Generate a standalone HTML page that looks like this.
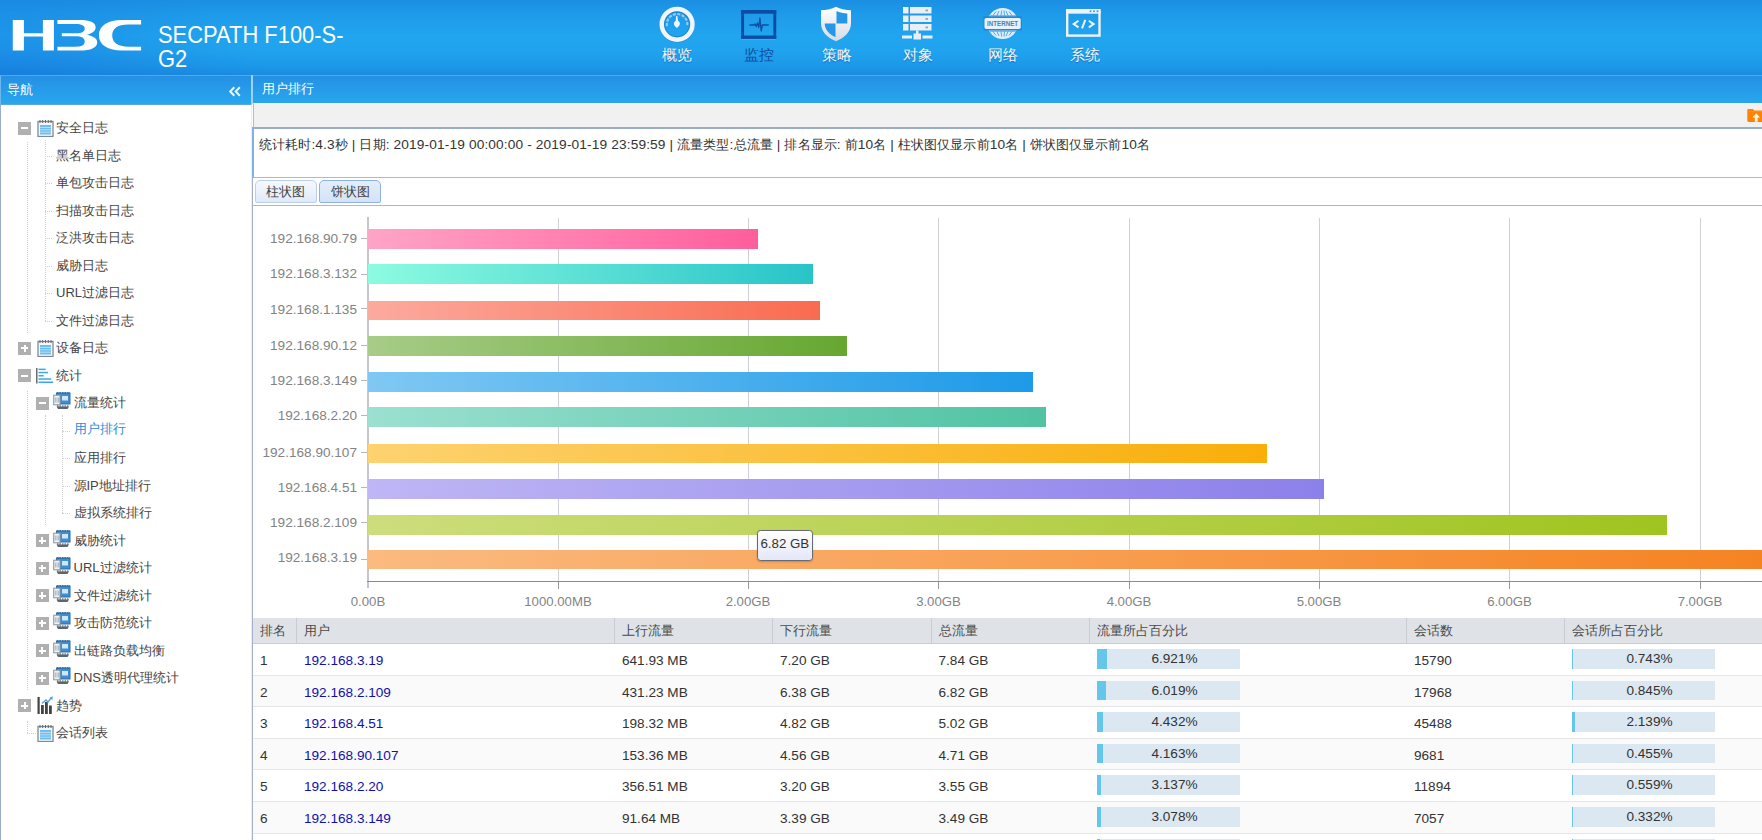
<!DOCTYPE html>
<html lang="zh">
<head>
<meta charset="utf-8">
<title>H3C SECPATH F100-S-G2</title>
<style>
*{box-sizing:border-box;margin:0;padding:0}
html,body{width:1762px;height:840px;overflow:hidden;background:#fff}
body{position:relative;font-family:"Liberation Sans",sans-serif;font-size:13px;color:#333}
.abs{position:absolute}
/* header */
#hdr{position:absolute;left:0;top:0;width:1762px;height:75px;background:linear-gradient(180deg,#1b8fe3 0%,#1e9cea 22%,#21a5ef 48%,#20a3ee 68%,#1c98e8 88%,#1a8ce0 100%)}
#hdr .vig{position:absolute;left:0;top:0;width:260px;height:75px;background:radial-gradient(ellipse 260px 110px at 0 100%,rgba(20,105,215,.42),rgba(20,110,215,0))}
#ttl{position:absolute;left:158.3px;top:23px;color:#fff;font-size:24px;line-height:23.8px;white-space:nowrap;transform:scaleX(.913);transform-origin:0 0}
.mi{position:absolute;top:46px;width:60px;text-align:center;color:#f2f6fa;font-size:15px;line-height:18px;text-shadow:0 1px 1px rgba(0,60,130,.45)}
.mi.sel{color:#0c4ea4;text-shadow:none}
/* nav */
#navt{position:absolute;left:0;top:75px;width:251px;height:29px;background:linear-gradient(180deg,#2590e3 0,#2699e8 40%,#28a7ee 100%);border-left:1px solid #6db6f0;border-top:1px solid #4aaaf2}
#navt span{position:absolute;left:6px;top:6px;color:#fff;font-size:13px;line-height:16px}
#navb{position:absolute;left:0;top:104px;width:252px;height:736px;background:#fff;border-left:1px solid #9caccb;border-right:1px solid #e6eef8;border-top:1px solid #5aa6e4}
.tr{position:absolute;left:0;height:27.5px;width:250px;line-height:27.5px;font-size:13px;color:#444;white-space:nowrap}
.tr .tx{position:absolute;top:0}
.pm{position:absolute;width:13px;height:13px;background:#b0b0b0;top:7.5px}
.pm:before{content:"";position:absolute;left:3px;top:5.5px;width:7px;height:2px;background:#fff}
.pm.plus:after{content:"";position:absolute;left:5.5px;top:3px;width:2px;height:7px;background:#fff}
.vl{position:absolute;width:0;border-left:1px dotted #cfcfcf}
.hl{position:absolute;height:0;border-top:1px dotted #cfcfcf}
/* main */
#mt{position:absolute;left:253px;top:75px;width:1509px;height:27.5px;background:linear-gradient(180deg,#2590e3 0,#2699e8 40%,#28a7ee 100%);border-top:1px solid #4aaaf2}
#mt span{position:absolute;left:9px;top:5px;color:#fff;font-size:13px;line-height:16px}
#tb{position:absolute;left:252.5px;top:103px;width:1510px;height:24px;background:#f1f1f2;border-left:1px solid #b4bac6;border-top:1px solid #fff}
#info{position:absolute;left:252px;top:127px;width:1510px;height:51px;background:#fff;border-top:2px solid #98adc9;border-bottom:1px solid #a5bcd9;border-left:2.5px solid #7fb2ea}
#info b{font-weight:normal;font-size:13.7px;letter-spacing:.14px}
#info span{letter-spacing:.09px;position:absolute;left:5px;top:8px;font-size:13px;line-height:16px;color:#333;white-space:nowrap}
#tabs{position:absolute;left:252px;top:178px;width:1510px;height:28px;border-bottom:1px solid #a3b6d2;background:#fff}
.tab{position:absolute;top:2px;height:23px;border:1px solid #b9cfec;border-radius:5px 5px 2px 2px;background:linear-gradient(180deg,#f6f9fd,#dfeaf7);font-size:13px;line-height:21px;text-align:center;color:#444}
.tab.sel{border-color:#8db2e3;background:linear-gradient(180deg,#e4eefa,#d3e3f6)}
#lb{position:absolute;left:251.5px;top:178px;width:1.7px;height:662px;background:#a5b1ca}
/* chart */
.gl{position:absolute;top:218px;width:1px;height:363px;background:#cdd0d6}
.gl:after{content:"";position:absolute;left:0;top:363px;width:1px;height:8px;background:#9a9a9a}
.bar{position:absolute;left:368px;height:19.6px}
.yl{position:absolute;left:255px;width:102px;text-align:right;font-size:13.6px;line-height:16px;color:#838383;white-space:nowrap}
.yt{position:absolute;left:361px;width:6px;height:1px;background:#b8b8b8}
.xl{position:absolute;top:594px;width:120px;text-align:center;font-size:13.2px;line-height:16px;color:#838383}
/* table */
#th{position:absolute;left:253px;top:618px;width:1509px;height:26px;background:#dfe3e7;border-bottom:1px solid #c9ced4}
#th div{position:absolute;top:0;height:25px;line-height:25px;font-size:13px;color:#4a4a4a;padding-left:6.5px;border-left:1px solid #c8cdd3;white-space:nowrap}
#th div:first-child{border-left:none;padding-left:7px}
.row{position:absolute;left:253px;width:1509px;height:31.7px;border-bottom:1px solid #e6e6e6;font-size:13.6px;color:#333}
.row.alt{background:#fafafa}
.row span{position:absolute;top:0;line-height:33px;white-space:nowrap}
.row a{color:#1010b0;text-decoration:none}
.pb{position:absolute;top:5px;width:143px;height:19.6px;background:#dbe8f1;text-align:center;padding-left:12px;line-height:19px;font-size:13.6px;color:#333}
.pb i{position:absolute;left:0;top:0;height:100%;background:#64c6ea}
.pb b{position:relative;font-weight:normal}
</style>
</head>
<body>
<div id="hdr"><div class="vig"></div></div>
<svg class="abs" style="left:0;top:10px" width="160" height="50" viewBox="0 10 160 50">
<g fill="#fff">
<path d="M12.800 20h11.100v13.200h19v-13.200h11v30.500h-11v-14.100h-19v14.100h-11.100z"/>
<path d="M57.400 20L80 20C89.500 20 95.600 22.300 95.600 27.400C95.600 31 92 33.400 86.900 34.700C93 36 97.200 38.200 97.200 42.200C97.200 47.800 90.500 50.500 80 50.500L57.400 50.500L57.400 46.700L76 46.700C81.500 46.700 84.700 45 84.700 41.500C84.700 38 81.500 36.300 76 36.300L61.800 36.300L61.800 33.300L76 33.300C81.500 33.300 84.700 31.700 84.700 28.700C84.700 25.700 81.500 24.100 76 24.100L57.400 24.100Z"/>
<path d="M141.100 20L122 20C108 20 98.900 25.500 98.900 35.200C98.900 45 108 50.500 122 50.500L141.100 50.500L141.100 46.700L128 46.700C118 46.700 112.200 42.700 112.200 35.600C112.200 28.500 118 24.600 128 24.600L141.100 24.600Z"/>
</g></svg>
<div id="ttl">SECPATH F100-S-<br>G2</div>
<svg class="abs" style="left:657px;top:4px" width="40" height="40" viewBox="657 4 40 40">
<circle cx="677.100" cy="25" r="15.300" fill="none" stroke="#1670c4" stroke-opacity=".35" stroke-width="4.500"/>
<circle cx="677.100" cy="24.300" r="12.500" fill="none" stroke="#1577cc" stroke-opacity=".55" stroke-width="1.400"/>
<circle cx="677.100" cy="24.300" r="15.350" fill="none" stroke="#f1f5f9" stroke-width="4.500"/>
<path d="M666.960 26.100A10.300 10.300 0 1 1 687.240 26.100" fill="none" stroke="#d9ecfa" stroke-opacity=".6" stroke-width="2.200" stroke-dasharray="3.200 1.300"/>
<path d="M676.100 16l1.300 0l.7 6l-2.400 0z" fill="#f1f5f9"/>
<path d="M676.900 20.800c1.700 0 3 1.300 3 3c0 1.800-1.500 2.700-3 4.200c-1.500-1.500-3-2.400-3-4.200c0-1.700 1.300-3 3-3z" fill="#f1f5f9"/>
</svg>
<svg class="abs" style="left:739px;top:6px" width="40" height="38" viewBox="739 6 40 38">
<rect x="741.500" y="38.600" width="34.500" height="1" fill="#5cb6f3" fill-opacity=".8"/>
<rect x="742.600" y="11.500" width="32.200" height="25.700" fill="none" stroke="#0b4da3" stroke-width="2.900"/>
<rect x="741.150" y="10" width="35.100" height="3.700" fill="#0b4da3"/>
<rect x="741.150" y="35.700" width="35.100" height="3" fill="#0b4da3"/>
<path d="M749.500 25h4.500l1 -1l1.200 2.500l1.300 -3.500l1.300 4.500l1.100-9.500l1.300 13l1.200-6h6.300" fill="none" stroke="#0b4da3" stroke-width="1.300" stroke-linejoin="round"/>
</svg>
<svg class="abs" style="left:818px;top:4px" width="36" height="40" viewBox="818 4 36 40">
<defs><linearGradient id="sg" x1="0" y1="0" x2="0" y2="1"><stop offset="0" stop-color="#ffffff"/><stop offset="1" stop-color="#d3dce6"/></linearGradient></defs>
<path d="M836 6.800c-4 2.200-9.500 3.400-15 3.500v13c0 8.500 6.500 14.500 15 18c8.500-3.500 15-9.500 15-18v-13c-5.500-.1-11-1.300-15-3.500z" fill="url(#sg)"/>
<path d="M836.500 11v12.500h10.800v-10c-3.800-.2-7.800-1.100-10.800-2.500z" fill="#2597e6"/>
<path d="M835.500 23.500h-10.800c0 6 4.500 10.800 10.800 13.800z" fill="#2597e6"/>
</svg>
<svg class="abs" style="left:900px;top:4px" width="36" height="40" viewBox="900 4 36 40">
<g fill="#e9eff5">
<rect x="903" y="7" width="5.500" height="6.500"/><rect x="910" y="7" width="21.500" height="6.500"/>
<rect x="903" y="15.500" width="5.500" height="6.500"/><rect x="910" y="15.500" width="21.500" height="6.500"/>
<rect x="903" y="24" width="5.500" height="6.500"/><rect x="910" y="24" width="21.500" height="6.500"/>
<rect x="916" y="30.500" width="2.500" height="4"/>
<rect x="913.500" y="33.500" width="7.500" height="6"/>
<rect x="902" y="35.500" width="10" height="3"/><rect x="922.500" y="35.500" width="10" height="3"/>
</g>
<g fill="#8fa6bd"><rect x="925.500" y="9.500" width="2.500" height="1.800"/><rect x="925.500" y="18" width="2.500" height="1.800"/><rect x="925.500" y="26.500" width="2.500" height="1.800"/></g>
</svg>
<svg class="abs" style="left:982px;top:4px" width="42" height="40" viewBox="982 4 42 40">
<defs><clipPath id="gc"><circle cx="1002.700" cy="23.500" r="15.400"/></clipPath></defs>
<circle cx="1002.700" cy="23.500" r="15.400" fill="#dcefff"/>
<g clip-path="url(#gc)" fill="none" stroke="#2b8fdc" stroke-width=".9" stroke-opacity=".85">
<path d="M993 15.500l3-4M997 15.500l2-4.500M1001 15.500l.7-5M1004.500 15.500l-.5-5M1008 15.500l-2-4.500M1012 15.500l-3-4M990 15.800h26"/>
<path d="M993 31.500l3 4M997 31.500l2 4.500M1001 31.500l.7 5M1004.500 31.500l-.5 5M1008 31.500l-2 4.500M1012 31.500l-3 4M990 31.200h26"/>
</g>
<rect x="983.500" y="16.200" width="38.400" height="14.300" fill="#2387d6"/>
<rect x="984.500" y="17.900" width="36.200" height="11" rx="1.600" fill="#e6f3fd"/>
<text x="1002.600" y="26" font-family="Liberation Sans, sans-serif" font-size="6.600" font-weight="bold" text-anchor="middle" fill="#4f7fae" textLength="31" lengthAdjust="spacingAndGlyphs">INTERNET</text>
</svg>
<svg class="abs" style="left:1064px;top:6px" width="40" height="34" viewBox="1064 6 40 34">
<rect x="1067.200" y="12" width="32.300" height="23.600" fill="none" stroke="#eef3f8" stroke-width="2.400"/>
<rect x="1066" y="9" width="34.700" height="4.600" fill="#eef3f8"/>
<g fill="#4a97d8"><circle cx="1090.500" cy="11.300" r="1"/><circle cx="1094" cy="11.300" r="1"/><circle cx="1097.500" cy="11.300" r="1"/></g>
<path d="M1078.500 20.800l-4.800 3.300l4.800 3.300M1088.800 20.800l4.800 3.300l-4.800 3.300M1085.300 19.800l-3.300 8.600" fill="none" stroke="#eef3f8" stroke-width="2"/>
</svg>
<div class="mi" style="left:647px">概览</div>
<div class="mi sel" style="left:728.5px">监控</div>
<div class="mi" style="left:807px">策略</div>
<div class="mi" style="left:888px">对象</div>
<div class="mi" style="left:973px">网络</div>
<div class="mi" style="left:1055px">系统</div>
<div id="navt"><span>导航</span><svg class="abs" style="left:227px;top:10px" width="14" height="12" viewBox="0 0 14 12"><path d="M6.300 1.200l-4.100 4.300l4.100 4.300M11.800 1.200l-4.100 4.300l4.100 4.300" fill="none" stroke="#eaf6ff" stroke-width="2"/></svg></div>
<i class="abs" style="left:251px;top:75px;width:2px;height:29px;background:#9fd3f9"></i>
<div id="navb"></div>
<div class="tr" style="top:114.25px"><i class="pm" style="left:18px"></i><svg class="abs" style="left:37px;top:4.5px" width="17" height="18" viewBox="0 0 17 18"><rect x="1" y="2.500" width="15" height="15" fill="#f4f8fc" stroke="#7d8a96" stroke-width="1.300"/><path d="M3 1v3M5.700 1v3M8.500 1v3M11.300 1v3M14 1v3" stroke="#666" stroke-width="1"/><rect x="3" y="6" width="11" height="9.500" fill="#6bbcf0"/><path d="M3 8.400h11M3 10.800h11M3 13.200h11" stroke="#cfe8fa" stroke-width=".8"/></svg><span class="tx" style="left:56px">安全日志</span></div>
<div class="tr" style="top:141.75px"><span class="tx" style="left:56px">黑名单日志</span></div>
<div class="tr" style="top:169.25px"><span class="tx" style="left:56px">单包攻击日志</span></div>
<div class="tr" style="top:196.75px"><span class="tx" style="left:56px">扫描攻击日志</span></div>
<div class="tr" style="top:224.25px"><span class="tx" style="left:56px">泛洪攻击日志</span></div>
<div class="tr" style="top:251.75px"><span class="tx" style="left:56px">威胁日志</span></div>
<div class="tr" style="top:279.25px"><span class="tx" style="left:56px">URL过滤日志</span></div>
<div class="tr" style="top:306.75px"><span class="tx" style="left:56px">文件过滤日志</span></div>
<div class="tr" style="top:334.25px"><i class="pm plus" style="left:18px"></i><svg class="abs" style="left:37px;top:4.5px" width="17" height="18" viewBox="0 0 17 18"><rect x="1" y="2.500" width="15" height="15" fill="#f4f8fc" stroke="#7d8a96" stroke-width="1.300"/><path d="M3 1v3M5.700 1v3M8.500 1v3M11.300 1v3M14 1v3" stroke="#666" stroke-width="1"/><rect x="3" y="6" width="11" height="9.500" fill="#6bbcf0"/><path d="M3 8.400h11M3 10.800h11M3 13.200h11" stroke="#cfe8fa" stroke-width=".8"/></svg><span class="tx" style="left:56px">设备日志</span></div>
<div class="tr" style="top:361.75px"><i class="pm" style="left:18px"></i><svg class="abs" style="left:35.7px;top:5.3px" width="18" height="18" viewBox="0 0 18 18"><path d="M.8 1v15.500" stroke="#555" stroke-width="1.300"/><g fill="#3ba7ea"><rect x="2.500" y="1.600" width="7.200" height="1.500"/><rect x="2.500" y="4.800" width="9.600" height="1.500"/><rect x="2.500" y="8" width="5.200" height="1.500"/><rect x="2.500" y="11.300" width="12.700" height="1.500"/><rect x="2.500" y="14.500" width="14.700" height="1.500"/></g></svg><span class="tx" style="left:56px">统计</span></div>
<div class="tr" style="top:389.25px"><i class="pm" style="left:35.5px"></i><svg class="abs" style="left:52.5px;top:3px" width="18" height="18" viewBox="0 0 18 18"><rect x="3.500" y="1" width="13.500" height="11" fill="#3f8ed0" stroke="#2d6ea8" stroke-width="1"/><path d="M4 .8h13" stroke="#2d5f90" stroke-width="1.200" stroke-dasharray="1.500 1"/><rect x=".7" y="3.200" width="6.300" height="9.600" fill="#eef2f6" stroke="#8a949e" stroke-width="1"/><path d="M2.300 5.500v5M4 5.500v5M5.600 5.500v5" stroke="#9aa4ae" stroke-width=".8"/><rect x="9" y="4" width="6" height="4.500" fill="#cfe6f8"/><path d="M3.500 14.500h12.500l-1.500 2.500h-9.500z" fill="#5a6670"/><path d="M4 14h12" stroke="#444" stroke-width="1" stroke-dasharray="1.500 1"/></svg><span class="tx" style="left:73.5px">流量统计</span></div>
<div class="tr" style="top:416.75px"><span class="tx" style="left:73.5px;color:#2b8bd8;top:-1.500px">用户排行</span></div>
<div class="tr" style="top:444.25px"><span class="tx" style="left:73.5px">应用排行</span></div>
<div class="tr" style="top:471.75px"><span class="tx" style="left:73.5px">源IP地址排行</span></div>
<div class="tr" style="top:499.25px"><span class="tx" style="left:73.5px">虚拟系统排行</span></div>
<div class="tr" style="top:526.75px"><i class="pm plus" style="left:35.5px"></i><svg class="abs" style="left:52.5px;top:3px" width="18" height="18" viewBox="0 0 18 18"><rect x="3.500" y="1" width="13.500" height="11" fill="#3f8ed0" stroke="#2d6ea8" stroke-width="1"/><path d="M4 .8h13" stroke="#2d5f90" stroke-width="1.200" stroke-dasharray="1.500 1"/><rect x=".7" y="3.200" width="6.300" height="9.600" fill="#eef2f6" stroke="#8a949e" stroke-width="1"/><path d="M2.300 5.500v5M4 5.500v5M5.600 5.500v5" stroke="#9aa4ae" stroke-width=".8"/><rect x="9" y="4" width="6" height="4.500" fill="#cfe6f8"/><path d="M3.500 14.500h12.500l-1.500 2.500h-9.500z" fill="#5a6670"/><path d="M4 14h12" stroke="#444" stroke-width="1" stroke-dasharray="1.500 1"/></svg><span class="tx" style="left:73.5px">威胁统计</span></div>
<div class="tr" style="top:554.25px"><i class="pm plus" style="left:35.5px"></i><svg class="abs" style="left:52.5px;top:3px" width="18" height="18" viewBox="0 0 18 18"><rect x="3.500" y="1" width="13.500" height="11" fill="#3f8ed0" stroke="#2d6ea8" stroke-width="1"/><path d="M4 .8h13" stroke="#2d5f90" stroke-width="1.200" stroke-dasharray="1.500 1"/><rect x=".7" y="3.200" width="6.300" height="9.600" fill="#eef2f6" stroke="#8a949e" stroke-width="1"/><path d="M2.300 5.500v5M4 5.500v5M5.600 5.500v5" stroke="#9aa4ae" stroke-width=".8"/><rect x="9" y="4" width="6" height="4.500" fill="#cfe6f8"/><path d="M3.500 14.500h12.500l-1.500 2.500h-9.500z" fill="#5a6670"/><path d="M4 14h12" stroke="#444" stroke-width="1" stroke-dasharray="1.500 1"/></svg><span class="tx" style="left:73.5px">URL过滤统计</span></div>
<div class="tr" style="top:581.75px"><i class="pm plus" style="left:35.5px"></i><svg class="abs" style="left:52.5px;top:3px" width="18" height="18" viewBox="0 0 18 18"><rect x="3.500" y="1" width="13.500" height="11" fill="#3f8ed0" stroke="#2d6ea8" stroke-width="1"/><path d="M4 .8h13" stroke="#2d5f90" stroke-width="1.200" stroke-dasharray="1.500 1"/><rect x=".7" y="3.200" width="6.300" height="9.600" fill="#eef2f6" stroke="#8a949e" stroke-width="1"/><path d="M2.300 5.500v5M4 5.500v5M5.600 5.500v5" stroke="#9aa4ae" stroke-width=".8"/><rect x="9" y="4" width="6" height="4.500" fill="#cfe6f8"/><path d="M3.500 14.500h12.500l-1.500 2.500h-9.500z" fill="#5a6670"/><path d="M4 14h12" stroke="#444" stroke-width="1" stroke-dasharray="1.500 1"/></svg><span class="tx" style="left:73.5px">文件过滤统计</span></div>
<div class="tr" style="top:609.25px"><i class="pm plus" style="left:35.5px"></i><svg class="abs" style="left:52.5px;top:3px" width="18" height="18" viewBox="0 0 18 18"><rect x="3.500" y="1" width="13.500" height="11" fill="#3f8ed0" stroke="#2d6ea8" stroke-width="1"/><path d="M4 .8h13" stroke="#2d5f90" stroke-width="1.200" stroke-dasharray="1.500 1"/><rect x=".7" y="3.200" width="6.300" height="9.600" fill="#eef2f6" stroke="#8a949e" stroke-width="1"/><path d="M2.300 5.500v5M4 5.500v5M5.600 5.500v5" stroke="#9aa4ae" stroke-width=".8"/><rect x="9" y="4" width="6" height="4.500" fill="#cfe6f8"/><path d="M3.500 14.500h12.500l-1.500 2.500h-9.500z" fill="#5a6670"/><path d="M4 14h12" stroke="#444" stroke-width="1" stroke-dasharray="1.500 1"/></svg><span class="tx" style="left:73.5px">攻击防范统计</span></div>
<div class="tr" style="top:636.75px"><i class="pm plus" style="left:35.5px"></i><svg class="abs" style="left:52.5px;top:3px" width="18" height="18" viewBox="0 0 18 18"><rect x="3.500" y="1" width="13.500" height="11" fill="#3f8ed0" stroke="#2d6ea8" stroke-width="1"/><path d="M4 .8h13" stroke="#2d5f90" stroke-width="1.200" stroke-dasharray="1.500 1"/><rect x=".7" y="3.200" width="6.300" height="9.600" fill="#eef2f6" stroke="#8a949e" stroke-width="1"/><path d="M2.300 5.500v5M4 5.500v5M5.600 5.500v5" stroke="#9aa4ae" stroke-width=".8"/><rect x="9" y="4" width="6" height="4.500" fill="#cfe6f8"/><path d="M3.500 14.500h12.500l-1.500 2.500h-9.500z" fill="#5a6670"/><path d="M4 14h12" stroke="#444" stroke-width="1" stroke-dasharray="1.500 1"/></svg><span class="tx" style="left:73.5px">出链路负载均衡</span></div>
<div class="tr" style="top:664.25px"><i class="pm plus" style="left:35.5px"></i><svg class="abs" style="left:52.5px;top:3px" width="18" height="18" viewBox="0 0 18 18"><rect x="3.500" y="1" width="13.500" height="11" fill="#3f8ed0" stroke="#2d6ea8" stroke-width="1"/><path d="M4 .8h13" stroke="#2d5f90" stroke-width="1.200" stroke-dasharray="1.500 1"/><rect x=".7" y="3.200" width="6.300" height="9.600" fill="#eef2f6" stroke="#8a949e" stroke-width="1"/><path d="M2.300 5.500v5M4 5.500v5M5.600 5.500v5" stroke="#9aa4ae" stroke-width=".8"/><rect x="9" y="4" width="6" height="4.500" fill="#cfe6f8"/><path d="M3.500 14.500h12.500l-1.500 2.500h-9.500z" fill="#5a6670"/><path d="M4 14h12" stroke="#444" stroke-width="1" stroke-dasharray="1.500 1"/></svg><span class="tx" style="left:73.5px">DNS透明代理统计</span></div>
<div class="tr" style="top:691.75px"><i class="pm plus" style="left:18px"></i><svg class="abs" style="left:37px;top:4px" width="17" height="19" viewBox="0 0 17 19"><g fill="#444"><rect x=".5" y="1" width="2.200" height="17"/><rect x="4" y="9" width="2.800" height="9"/><rect x="8" y="6" width="2.800" height="12"/><rect x="12" y="9.500" width="2.800" height="8.500"/></g><path d="M5 7.500l4-3.500l2 2l3.500-4.500" fill="none" stroke="#4aa3e4" stroke-width="1.300"/><path d="M15.800 .3l-.4 3.600l-2.800-2.200z" fill="#4aa3e4"/></svg><span class="tx" style="left:56px">趋势</span></div>
<div class="tr" style="top:719.25px"><svg class="abs" style="left:37px;top:4.5px" width="17" height="18" viewBox="0 0 17 18"><rect x="1" y="2.500" width="15" height="15" fill="#f4f8fc" stroke="#7d8a96" stroke-width="1.300"/><path d="M3 1v3M5.700 1v3M8.500 1v3M11.300 1v3M14 1v3" stroke="#666" stroke-width="1"/><rect x="3" y="6" width="11" height="9.500" fill="#6bbcf0"/><path d="M3 8.400h11M3 10.800h11M3 13.200h11" stroke="#cfe8fa" stroke-width=".8"/></svg><span class="tx" style="left:56px">会话列表</span></div>
<i class="vl" style="left:27px;top:142px;height:190.5px"></i>
<i class="vl" style="left:44.5px;top:140px;height:180.5px"></i>
<i class="hl" style="left:45px;top:155.5px;width:7px"></i>
<i class="hl" style="left:45px;top:183px;width:7px"></i>
<i class="hl" style="left:45px;top:210.5px;width:7px"></i>
<i class="hl" style="left:45px;top:238px;width:7px"></i>
<i class="hl" style="left:45px;top:265.5px;width:7px"></i>
<i class="hl" style="left:45px;top:293px;width:7px"></i>
<i class="hl" style="left:45px;top:320.5px;width:7px"></i>
<i class="vl" style="left:27px;top:391px;height:299px"></i>
<i class="vl" style="left:44.5px;top:415px;height:110px"></i>
<i class="vl" style="left:62px;top:415px;height:98px"></i>
<i class="hl" style="left:62px;top:430.5px;width:8px"></i>
<i class="hl" style="left:62px;top:458px;width:8px"></i>
<i class="hl" style="left:62px;top:485.5px;width:8px"></i>
<i class="hl" style="left:62px;top:513px;width:8px"></i>
<i class="vl" style="left:27px;top:721px;height:12px"></i>
<i class="hl" style="left:27px;top:733px;width:9px"></i>
<div id="mt"><span>用户排行</span></div>
<div id="tb"><svg class="abs" style="left:1493.3px;top:4px" width="15" height="15" viewBox="0 0 15 15"><path d="M.300 2.200c0-.8.500-1.300 1.300-1.300h4.200l1.500 1.500h7.700v11.500h-13.400c-.8 0-1.300-.5-1.300-1.300z" fill="#ff8203"/><path d="M.300 3.600h14.700" stroke="#f79a3a" stroke-width=".6"/><path d="M9.200 5.300l3.800 4.200h-2.400v4.300h-2.800v-4.300h-2.400z" fill="#fff3d6"/></svg></div>
<div id="info"><span>统计耗时<b>:4.3</b>秒<b> | </b>日期<b>: 2019-01-19 00:00:00 - 2019-01-19 23:59:59 | </b>流量类型<b>:</b>总流量<b> | </b>排名显示<b>: </b>前<b>10</b>名<b> | </b>柱状图仅显示前<b>10</b>名<b> | </b>饼状图仅显示前<b>10</b>名</span></div>
<div id="tabs"><div class="tab" style="left:2.7px;width:62px">柱状图</div><div class="tab sel" style="left:67px;width:62px">饼状图</div></div>
<div id="lb"></div>
<i class="gl" style="left:557.5px"></i>
<i class="gl" style="left:747.5px"></i>
<i class="gl" style="left:938px"></i>
<i class="gl" style="left:1128.5px"></i>
<i class="gl" style="left:1318.5px"></i>
<i class="gl" style="left:1509px"></i>
<i class="gl" style="left:1699.5px"></i>
<i class="abs" style="left:367px;top:217px;width:2px;height:371px;background:#c3c6cc"></i>
<i class="abs" style="left:367px;top:581px;width:1395px;height:1px;background:#8c8c8c"></i>
<i class="bar" style="top:229px;height:19.5px;width:390px;background:linear-gradient(90deg,#ffa4c6,#ff5e9c)"></i>
<div class="yl" style="top:231px">192.168.90.79</div>
<i class="yt" style="top:238px"></i>
<i class="bar" style="top:264px;height:19.8px;width:445px;background:linear-gradient(90deg,#8dfbe1,#27c4c8)"></i>
<div class="yl" style="top:266px">192.168.3.132</div>
<i class="yt" style="top:274px"></i>
<i class="bar" style="top:301px;height:18.7px;width:452px;background:linear-gradient(90deg,#fcaa9e,#f96b50)"></i>
<div class="yl" style="top:302px">192.168.1.135</div>
<i class="yt" style="top:308px"></i>
<i class="bar" style="top:336px;height:19.5px;width:479px;background:linear-gradient(90deg,#a7cc88,#66a730)"></i>
<div class="yl" style="top:338px">192.168.90.12</div>
<i class="yt" style="top:345px"></i>
<i class="bar" style="top:372px;height:19.6px;width:665px;background:linear-gradient(90deg,#7fc8f3,#1d9ae8)"></i>
<div class="yl" style="top:373px">192.168.3.149</div>
<i class="yt" style="top:380px"></i>
<i class="bar" style="top:407px;height:19.8px;width:678px;background:linear-gradient(90deg,#9be0d0,#50c3a3)"></i>
<div class="yl" style="top:408px">192.168.2.20</div>
<i class="yt" style="top:415px"></i>
<i class="bar" style="top:444px;height:18.7px;width:899px;background:linear-gradient(90deg,#fdd26f,#f9ae0a)"></i>
<div class="yl" style="top:445px">192.168.90.107</div>
<i class="yt" style="top:452px"></i>
<i class="bar" style="top:479px;height:19.6px;width:956px;background:linear-gradient(90deg,#beb6f5,#8c80ea)"></i>
<div class="yl" style="top:480px">192.168.4.51</div>
<i class="yt" style="top:487px"></i>
<i class="bar" style="top:515px;height:19.5px;width:1299px;background:linear-gradient(90deg,#cddd7c,#a0c41f)"></i>
<div class="yl" style="top:515px">192.168.2.109</div>
<i class="yt" style="top:522px"></i>
<i class="bar" style="top:550px;height:19.4px;width:1422px;background:linear-gradient(90deg,#fbba80,#f58220)"></i>
<div class="yl" style="top:550px">192.168.3.19</div>
<i class="yt" style="top:559px"></i>
<div class="xl" style="left:308px">0.00B</div>
<div class="xl" style="left:498px">1000.00MB</div>
<div class="xl" style="left:688px">2.00GB</div>
<div class="xl" style="left:878.5px">3.00GB</div>
<div class="xl" style="left:1069px">4.00GB</div>
<div class="xl" style="left:1259px">5.00GB</div>
<div class="xl" style="left:1449.5px">6.00GB</div>
<div class="xl" style="left:1640px">7.00GB</div>
<div class="abs" style="left:757px;top:530px;width:55.700px;height:30.700px;border:1px solid #666a72;border-radius:3.500px;background:linear-gradient(180deg,#ffffff 0%,#f3f4fc 45%,#e3e7f7 100%);font-size:13.300px;line-height:25px;text-align:center;color:#333;box-shadow:0 1px 2px rgba(0,0,0,.2);white-space:nowrap">6.82 GB</div>
<div id="th">
<div style="left:0px;width:43px">排名</div>
<div style="left:43px;width:318px">用户</div>
<div style="left:361px;width:158px">上行流量</div>
<div style="left:519px;width:159px">下行流量</div>
<div style="left:678px;width:158px">总流量</div>
<div style="left:836px;width:317px">流量所占百分比</div>
<div style="left:1153px;width:158px">会话数</div>
<div style="left:1311px;width:198px">会话所占百分比</div>
</div>
<div class="row" style="top:644px"><span style="left:7px">1</span><span style="left:51px"><a>192.168.3.19</a></span><span style="left:369px">641.93 MB</span><span style="left:527px">7.20 GB</span><span style="left:685.500px">7.84 GB</span><div class="pb" style="left:844px"><i style="width:9.89703px"></i><b>6.921%</b></div><span style="left:1161px">15790</span><div class="pb" style="left:1319px"><i style="width:1.06249px"></i><b>0.743%</b></div></div>
<div class="row alt" style="top:675.6px"><span style="left:7px">2</span><span style="left:51px"><a>192.168.2.109</a></span><span style="left:369px">431.23 MB</span><span style="left:527px">6.38 GB</span><span style="left:685.500px">6.82 GB</span><div class="pb" style="left:844px"><i style="width:8.60717px"></i><b>6.019%</b></div><span style="left:1161px">17968</span><div class="pb" style="left:1319px"><i style="width:1.20835px"></i><b>0.845%</b></div></div>
<div class="row" style="top:707.2px"><span style="left:7px">3</span><span style="left:51px"><a>192.168.4.51</a></span><span style="left:369px">198.32 MB</span><span style="left:527px">4.82 GB</span><span style="left:685.500px">5.02 GB</span><div class="pb" style="left:844px"><i style="width:6.33776px"></i><b>4.432%</b></div><span style="left:1161px">45488</span><div class="pb" style="left:1319px"><i style="width:3.05877px"></i><b>2.139%</b></div></div>
<div class="row alt" style="top:738.8px"><span style="left:7px">4</span><span style="left:51px"><a>192.168.90.107</a></span><span style="left:369px">153.36 MB</span><span style="left:527px">4.56 GB</span><span style="left:685.500px">4.71 GB</span><div class="pb" style="left:844px"><i style="width:5.95309px"></i><b>4.163%</b></div><span style="left:1161px">9681</span><div class="pb" style="left:1319px"><i style="width:1px"></i><b>0.455%</b></div></div>
<div class="row" style="top:770.4px"><span style="left:7px">5</span><span style="left:51px"><a>192.168.2.20</a></span><span style="left:369px">356.51 MB</span><span style="left:527px">3.20 GB</span><span style="left:685.500px">3.55 GB</span><div class="pb" style="left:844px"><i style="width:4.48591px"></i><b>3.137%</b></div><span style="left:1161px">11894</span><div class="pb" style="left:1319px"><i style="width:1px"></i><b>0.559%</b></div></div>
<div class="row alt" style="top:802px"><span style="left:7px">6</span><span style="left:51px"><a>192.168.3.149</a></span><span style="left:369px">91.64 MB</span><span style="left:527px">3.39 GB</span><span style="left:685.500px">3.49 GB</span><div class="pb" style="left:844px"><i style="width:4.40154px"></i><b>3.078%</b></div><span style="left:1161px">7057</span><div class="pb" style="left:1319px"><i style="width:1px"></i><b>0.332%</b></div></div>
<div class="row" style="top:833.6px"><span style="left:7px">7</span><span style="left:51px"><a>192.168.90.12</a></span><span style="left:369px">78.10 MB</span><span style="left:527px">2.44 GB</span><span style="left:685.500px">2.52 GB</span><div class="pb" style="left:844px"><i style="width:3.18032px"></i><b>2.224%</b></div><span style="left:1161px">6312</span><div class="pb" style="left:1319px"><i style="width:1px"></i><b>0.297%</b></div></div>
</body>
</html>
